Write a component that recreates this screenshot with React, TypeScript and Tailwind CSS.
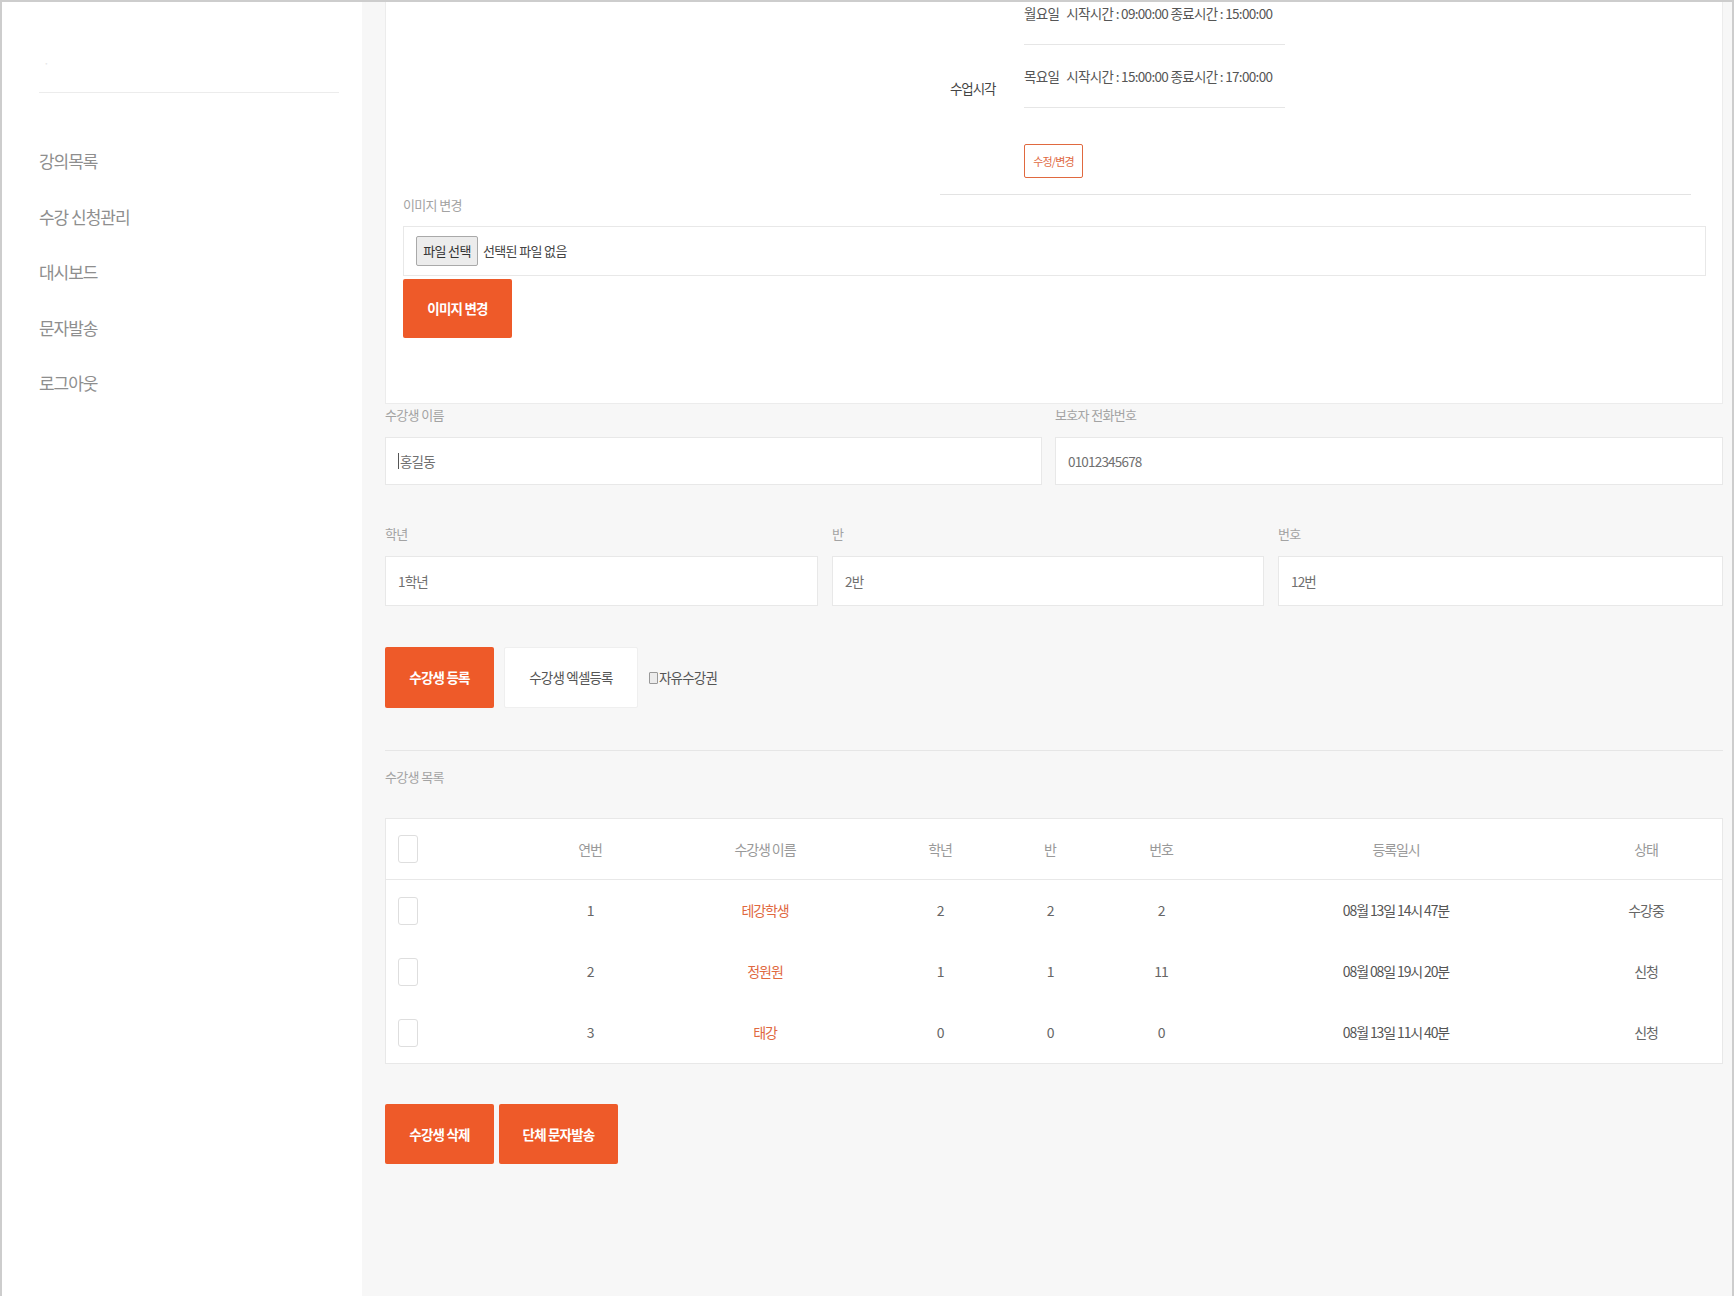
import React from "react";

const orange = "bg-[#ee5a29]";

const menu = ["강의목록", "수강 신청관리", "대시보드", "문자발송", "로그아웃"];

const students = [
  { no: 1, name: "테강학생", grade: 2, cls: 2, num: 2, date: "08월 13일 14시 47분", state: "수강중" },
  { no: 2, name: "정원원", grade: 1, cls: 1, num: 11, date: "08월 08일 19시 20분", state: "신청" },
  { no: 3, name: "태강", grade: 0, cls: 0, num: 0, date: "08월 13일 11시 40분", state: "신청" },
];

const cols = "grid grid-cols-[144px_120px_230px_120px_100px_122px_348px_1fr] items-center";

const Label = ({ text }: { text: string }) => (
  <div className="h-[20px] leading-[20px] text-[13px] tracking-[-0.05em] text-[#a3a3a3]">{text}</div>
);

const Field = ({ value, caret, tall }: { value: string; caret?: boolean; tall?: boolean }) => (
  <div className={`mt-[12px] ${tall ? "h-[50px]" : "h-[48px]"} flex items-center bg-white border border-[#e8e8e8] px-[12px] text-[13.5px] tracking-[-0.06em] text-[#707070]`}>
    {caret && <span className="w-px h-[16px] bg-[#555] mr-[1px]" />}
    {value}
  </div>
);

const Check = () => <span className="block w-[20px] h-[28px] rounded-[3px] border border-[#dedede] bg-white" />;

const App = () => {
  return (
    <div className="h-[1296px] w-full flex bg-[#f7f7f7] border-t-2 border-l-2 border-r-2 border-[#cdcdcd] overflow-hidden font-['Noto_Sans_CJK_KR','Noto_Sans',sans-serif]">

      {/* 사이드바 */}
      <aside className="w-[360px] shrink-0 bg-white pl-[37px] pr-[23px]">
        <div className="h-[91px] border-b border-[#ececec] pt-[52px] pl-[4px] text-[12px] text-[#e6e6e6]">·</div>
        <ul className="mt-[40px]">
          {menu.map((m) => (
            <li key={m} className="h-[55.5px] flex items-center text-[17px] tracking-[-0.06em] text-[#8e8e8e]">
              {m}
            </li>
          ))}
        </ul>
      </aside>

      {/* 본문 */}
      <main className="flex-1 pl-[23px] pr-[9px] flex flex-col">

        <section className="-mt-[21px] bg-white border border-[#ececec] pl-[17px] pr-[16px] pb-[65px]">
          <div className="ml-[537px] mr-[15px] flex items-center border-b border-[#e3e3e3]">
            <div className="w-[84px] pl-[10px] text-[13.5px] tracking-[-0.08em] text-[#444]">수업시각</div>
            <div className="w-[261px]">
              {[
                ["월요일", "09:00:00", "15:00:00"],
                ["목요일", "15:00:00", "17:00:00"],
              ].map(([day, s, e]) => (
                <div key={day} className="h-[63px] flex items-center border-b border-[#e6e6e6] text-[13.5px] tracking-[-0.05em] text-[#555] whitespace-nowrap">
                  {day}&nbsp;&nbsp; 시작시간 : {s} 종료시간 : {e}
                </div>
              ))}
              <div className="pt-[36px] pb-[16px]">
                <button className="h-[34px] w-[59px] border border-[#e0693f] rounded-[2px] bg-white text-[11px] tracking-[-0.08em] text-[#e0693f]">
                  수정/변경
                </button>
              </div>
            </div>
          </div>

          <Label text="이미지 변경" />
          <div className="mt-[11px] h-[50px] flex items-center border border-[#e8e8e8] pl-[12px] text-[13px] tracking-[-0.05em] text-[#444]">
            <span className="h-[30px] w-[62px] flex items-center justify-center bg-[#ececec] border border-[#a9a9a9] rounded-[2px] text-[#333]">파일 선택</span>
            <span className="ml-[5px]">선택된 파일 없음</span>
          </div>
          <button className={`mt-[3px] h-[59px] w-[109px] ${orange} rounded-[2px] text-white font-bold text-[13.5px] tracking-[-0.06em]`}>
            이미지 변경
          </button>
        </section>

        <div className="mt-[1px] grid grid-cols-[657px_1fr] gap-x-[13px]">
          <div>
            <Label text="수강생 이름" />
            <Field value="홍길동" caret />
          </div>
          <div>
            <Label text="보호자 전화번호" />
            <Field value="01012345678" />
          </div>
        </div>

        <div className="mt-[39px] grid grid-cols-[433px_432px_1fr] gap-x-[14px]">
          {[
            ["학년", "1학년"],
            ["반", "2반"],
            ["번호", "12번"],
          ].map(([l, v]) => (
            <div key={l}>
              <Label text={l} />
              <Field value={v} tall />
            </div>
          ))}
        </div>

        <div className="mt-[41px] flex items-center">
          <button className={`h-[61px] w-[109px] ${orange} rounded-[2px] text-white font-bold text-[13.5px] tracking-[-0.06em]`}>
            수강생 등록
          </button>
          <button className="ml-[10px] h-[61px] w-[134px] bg-white border border-[#efefef] rounded-[2px] text-[#555] text-[13.5px] tracking-[-0.06em]">
            수강생 엑셀등록
          </button>
          <span className="ml-[11px] w-[9px] h-[12px] border border-[#999] bg-[#ececec] rounded-[1px]" />
          <span className="ml-[1px] text-[13.5px] tracking-[-0.06em] text-[#555]">자유수강권</span>
        </div>

        <div className="mt-[42px] border-t border-[#e6e6e6]" />
        <div className="mt-[16px]">
          <Label text="수강생 목록" />
        </div>

        {/* 수강생 목록 표 */}
        <div className="mt-[31px] bg-white border border-[#e8e8e8] text-[14px] tracking-[-0.08em]">
          <div className={`${cols} h-[61px] border-b border-[#e8e8e8] text-[#999] text-center`}>
            <div className="pl-[12px]"><Check /></div>
            <div>연번</div>
            <div>수강생 이름</div>
            <div>학년</div>
            <div>반</div>
            <div>번호</div>
            <div>등록일시</div>
            <div>상태</div>
          </div>
          {students.map((s) => (
            <div key={s.no} className={`${cols} h-[61px] text-[#666] text-center`}>
              <div className="pl-[12px]"><Check /></div>
              <div>{s.no}</div>
              <div className="text-[#e0683f]">{s.name}</div>
              <div>{s.grade}</div>
              <div>{s.cls}</div>
              <div>{s.num}</div>
              <div className="text-[#555]">{s.date}</div>
              <div>{s.state}</div>
            </div>
          ))}
        </div>

        <div className="mt-[40px] flex gap-[5px]">
          <button className={`h-[60px] w-[109px] ${orange} rounded-[2px] text-white font-bold text-[13.5px] tracking-[-0.06em]`}>
            수강생 삭제
          </button>
          <button className={`h-[60px] w-[119px] ${orange} rounded-[2px] text-white font-bold text-[13.5px] tracking-[-0.06em]`}>
            단체 문자발송
          </button>
        </div>
      </main>
    </div>
  );
};

export default App;
